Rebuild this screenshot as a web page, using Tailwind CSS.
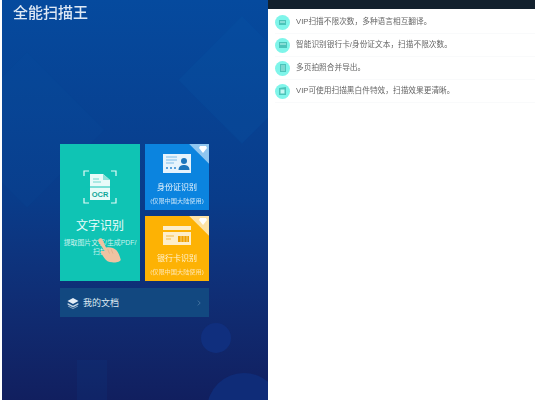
<!DOCTYPE html>
<html lang="zh-CN">
<head>
<meta charset="UTF-8">
<title>全能扫描王</title>
<script src="https://cdn.jsdelivr.net/npm/@tailwindcss/browser@4"></script>
</head>
<body class="bg-white w-[535px] h-[400px] overflow-hidden font-['Liberation_Sans','Noto_Sans_CJK_SC',sans-serif]">
<div class="flex h-[400px] pl-[2px]">
  <!-- left panel -->
  <div class="relative w-[266px] h-full overflow-hidden bg-gradient-to-b from-[#054a9e] via-[#093c8a] to-[#111f5f]">
    <div class="absolute left-[-30px] top-[75px] w-[110px] h-[110px] rotate-45 bg-[#0a5cab]/10"></div>
    <div class="absolute left-[195px] top-[35px] w-[90px] h-[90px] rotate-45 bg-[#0a5cab]/20"></div>
    <div class="absolute left-[75px] top-[360px] w-[30px] h-[40px] bg-[#0d3a85]/20"></div>
    <div class="absolute left-[199px] top-[323px] w-[30px] h-[30px] rounded-full bg-[#102f7e]"></div>
    <div class="absolute left-[205px] top-[373px] w-[74px] h-[74px] rounded-full bg-[#0f2c78]"></div>

    <div class="relative pl-[11px] pt-[3px] text-[15px] leading-[20px] text-[#dfe9f5] font-medium blur-[0.3px]">全能扫描王</div>

    <div class="relative ml-[58px] mt-[121px] w-[149px] blur-[0.4px]">
      <div class="flex gap-[5px]">
        <!-- OCR card -->
        <div class="relative w-[80px] h-[137px] bg-[#0fc4b4] flex flex-col items-center text-white">
          <svg class="mt-[26px]" width="34" height="34" viewBox="0 0 34 34" fill="none">
            <path d="M1 6V1h5M28 1h5v5M33 28v5h-5M6 33H1v-5" stroke="#e4fbf8" stroke-width="1.2"/>
            <path d="M7 4h13l7 6v20H7z" fill="#e8fbf9"/>
            <path d="M20 4v6h7z" fill="#8be3da"/>
            <path d="M10 9h6M10 12h8" stroke="#6fd8ce" stroke-width="1"/>
            <path d="M3 17h28" stroke="#0fc4b4" stroke-width="1"/>
            <text x="17" y="27" text-anchor="middle" font-size="7.5" font-weight="700" fill="#0fa79a" font-family="Liberation Sans">OCR</text>
          </svg>
          <div class="mt-[14px] text-[12px] leading-[16px] text-[#eafcfa]">文字识别</div>
          <div class="mt-[5px] w-[78px] text-center text-[6.900px] leading-[8.500px] text-[#c9f3ee]">提取图片文字/生成PDF/扫描</div>
          <svg class="absolute left-[36px] top-[94px]" width="27" height="26" viewBox="0 0 28 30">
            <path d="M2 1c1-1 3-1 4 1l4 9c4-1 9 0 12 3 2 2 4 7 5 11 0 2-6 4-10 3-4 0-7-2-9-5l-4-6c-1-2 1-3 3-2l2 1L1 4c0-1 0-2 1-3z" fill="#eec3a2"/>
            <path d="M12 13l2 5M16 13l2 5" stroke="#d9a582" stroke-width="0.7"/>
          </svg>
        </div>
        <div class="flex flex-col gap-[6px] w-[64px]">
          <!-- ID card -->
          <div class="relative h-[66px] bg-[#0b84df] flex flex-col items-center text-white overflow-hidden">
            <div class="absolute right-[-14px] top-[-14px] w-[28px] h-[28px] rotate-45 bg-[#8fc6f0]"></div>
            <svg class="absolute right-[2px] top-[2px]" width="8" height="7" viewBox="0 0 8 7"><path d="M1 0h6l1 2-4 5-4-5z" fill="#fff"/></svg>
            <svg class="mt-[10px]" width="28" height="19" viewBox="0 0 28 19">
              <rect width="28" height="19" fill="#e6f3fc"/>
              <path d="M3 3h11M3 6h11M3 9h8" stroke="#7dbdea" stroke-width="1"/>
              <path d="M3 14h2M7 14h2M11 14h2" stroke="#2a87cf" stroke-width="1.5"/>
              <circle cx="21" cy="7" r="3" fill="#1c76bd"/>
              <path d="M15.500 16c0-4 3-5 5.500-5s5.500 1 5.500 5z" fill="#1c76bd"/>
            </svg>
            <div class="mt-[9px] text-[8px] leading-[12px] text-[#eef7fd]">身份证识别</div>
            <div class="mt-[2px] text-[6.200px] leading-[9px] text-[#c5e2f7] whitespace-nowrap">(仅限中国大陆使用)</div>
          </div>
          <!-- bank card -->
          <div class="relative h-[65px] bg-[#fdb204] flex flex-col items-center text-white overflow-hidden">
            <div class="absolute right-[-14px] top-[-14px] w-[28px] h-[28px] rotate-45 bg-[#fde3a6]"></div>
            <svg class="absolute right-[2px] top-[2px]" width="8" height="7" viewBox="0 0 8 7"><path d="M1 0h6l1 2-4 5-4-5z" fill="#fff"/></svg>
            <svg class="mt-[10px]" width="28" height="19" viewBox="0 0 28 19">
              <rect width="28" height="19" fill="#fdeecb"/>
              <rect y="4" width="28" height="2" fill="#fdb204"/>
              <path d="M3 10h8M3 13h5" stroke="#f3bb46" stroke-width="1"/>
              <rect x="15" y="10" width="11" height="6" fill="#f0a100"/>
              <path d="M18 10v6M21 10v6M24 10v6" stroke="#fdeecb" stroke-width=".6"/>
            </svg>
            <div class="mt-[8px] text-[8px] leading-[12px] text-[#fff3d4]">银行卡识别</div>
            <div class="mt-[2px] text-[6.200px] leading-[9px] text-[#fee5ae] whitespace-nowrap">(仅限中国大陆使用)</div>
          </div>
        </div>
      </div>
      <!-- my documents -->
      <div class="mt-[7px] h-[29px] bg-[#124880] flex items-center pl-[7px] pr-[8px]">
        <svg width="12" height="12" viewBox="0 0 12 12">
          <path d="M6 1l5.500 3L6 7 .5 4z" fill="#e6eef6"/>
          <path d="M.8 6L6 8.800 11.200 6l.3 1.500L6 10.500.5 7.500z" fill="#bcd0e2"/>
          <path d="M1.500 8.800L6 11.200l4.500-2.400.5.800L6 12 1 9.600z" fill="#9db7cf"/>
        </svg>
        <span class="ml-[4px] text-[9px] leading-[12px] text-[#dde8f2]">我的文档</span>
        <svg class="ml-auto" width="4" height="6" viewBox="0 0 5 7" fill="none"><path d="M1 .5l3 3-3 3" stroke="#4f7da6" stroke-width="1"/></svg>
      </div>
    </div>
  </div>

  <!-- right panel -->
  <div class="flex-1 flex flex-col">
    <div class="h-[9px] bg-[#13212e]"></div>
    <div class="pl-[7px] pt-[2px] blur-[0.3px]">
      <div class="flex items-center h-[23px] text-[7.700px] text-[#666] border-b border-gray-50">
        <span class="w-[15px] h-[15px] rounded-full bg-[#7ff5ea] flex items-center justify-center"><svg width="7" height="7" viewBox="0 0 7 7"><path d="M0 1h7v5H0z" fill="#4cc4ba"/><path d="M1 3h5" stroke="#c4f7f2"/></svg></span>
        <span class="ml-[6px]">VIP扫描不限次数，多种语言相互翻译。</span>
      </div>
      <div class="flex items-center h-[23px] text-[7.700px] text-[#666] border-b border-gray-50">
        <span class="w-[15px] h-[15px] rounded-full bg-[#7ff5ea] flex items-center justify-center"><svg width="8" height="6" viewBox="0 0 8 6"><rect width="8" height="6" fill="#4cc4ba"/><path d="M1 2h6" stroke="#c4f7f2"/></svg></span>
        <span class="ml-[6px]">智能识别银行卡/身份证文本，扫描不限次数。</span>
      </div>
      <div class="flex items-center h-[23px] text-[7.700px] text-[#666] border-b border-gray-50">
        <span class="w-[15px] h-[15px] rounded-full bg-[#7ff5ea] flex items-center justify-center"><svg width="6" height="8" viewBox="0 0 6 8"><rect width="6" height="8" fill="#4cc4ba"/><path d="M1 2h4M1 4h4M1 6h4" stroke="#c4f7f2" stroke-width=".8"/></svg></span>
        <span class="ml-[6px]">多页拍照合并导出。</span>
      </div>
      <div class="flex items-center h-[23px] text-[7.700px] text-[#666] border-b border-gray-50">
        <span class="w-[15px] h-[15px] rounded-full bg-[#7ff5ea] flex items-center justify-center"><svg width="7" height="8" viewBox="0 0 7 8"><path d="M0 1l7-1v8H0z" fill="#4cc4ba"/><rect x="1.500" y="2.500" width="4" height="4" fill="#c4f7f2"/></svg></span>
        <span class="ml-[6px]">VIP可使用扫描黑白件特效，扫描效果更清晰。</span>
      </div>
    </div>
  </div>
</div>
</body>
</html>
